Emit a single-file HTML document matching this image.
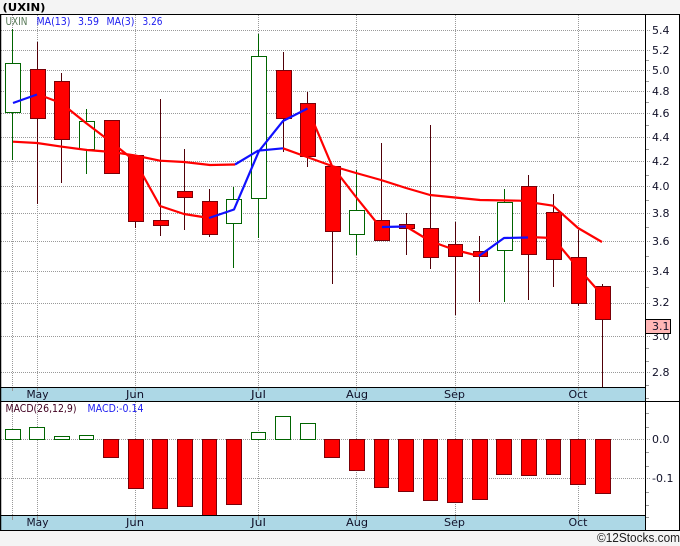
<!DOCTYPE html>
<html><head><meta charset="utf-8"><style>
html,body{margin:0;padding:0;background:#f4f4f4;width:680px;height:546px;overflow:hidden}
svg{display:block}
text{font-family:"DejaVu Sans","Liberation Sans",sans-serif;font-size:11px}
.g{fill:#fff;stroke:#006400;stroke-width:1}
.r{fill:#f00;stroke:#7a0008;stroke-width:1}
.m{fill:#101028}
.b{fill:#2020f0}
</style></head><body>
<svg width="680" height="546" viewBox="0 0 680 546" xmlns="http://www.w3.org/2000/svg">
<rect x="0" y="14" width="680" height="517" fill="#fff"/>
<rect x="0" y="387" width="645" height="14" fill="#add8e6"/>
<rect x="0" y="515" width="645" height="15" fill="#add8e6"/>
<!-- grid -->
<path d="M1 30.5H651M1 50.5H651M1 70.5H651M1 91.5H651M1 113.5H651M1 137.5H651M1 161.5H651M1 186.5H651M1 213.5H651M1 241.5H651M1 271.5H651M1 303.5H651M1 336.5H651M1 372.5H651M1 439.5H651M1 478.5H651" stroke="#999" stroke-width="1" stroke-dasharray="1 1" fill="none"/>
<path d="M12.5 15V387M37.5 15V387M135.5 15V387M258.5 15V387M356.5 15V387M455.5 15V387M578.5 15V387M12.5 402V515M37.5 402V515M135.5 402V515M258.5 402V515M356.5 402V515M455.5 402V515M578.5 402V515" stroke="#999" stroke-width="1" stroke-dasharray="1 1" fill="none"/>
<path d="M12.5 387V391M37.5 387V391M135.5 387V391M258.5 387V391M356.5 387V391M455.5 387V391M578.5 387V391M12.5 515V520M37.5 515V520M135.5 515V520M258.5 515V520M356.5 515V520M455.5 515V520M578.5 515V520" stroke="#999" stroke-width="1" fill="none"/>
<!-- wicks -->
<path d="M12.5 29V160M86.5 109V174M233.5 187V268M258.5 34V238M356.5 170V255M504.5 189V302" stroke="#006400" stroke-width="1" fill="none"/>
<path d="M37.5 42V204M61.5 73V183M111.5 120V174M135.5 155V228M160.5 99V236M184.5 149V230M209.5 189V237M283.5 52V152M307.5 92V167M332.5 166V284M381.5 143V240M406.5 213V255M430.5 125V269M455.5 222V315M479.5 236V302M528.5 175V300M553.5 194V287M578.5 230V306M602.5 284V387" stroke="#500008" stroke-width="1" fill="none"/>
<!-- candles -->
<rect class="g" x="5.5" y="63.5" width="15" height="49"/>
<rect class="r" x="30.5" y="69.5" width="15" height="49"/>
<rect class="r" x="54.5" y="81.5" width="15" height="58"/>
<rect class="g" x="79.5" y="121.5" width="15" height="28"/>
<rect class="r" x="104.5" y="120.5" width="15" height="53"/>
<rect class="r" x="128.5" y="155.5" width="15" height="66"/>
<rect class="r" x="153.5" y="220.5" width="15" height="5"/>
<rect class="r" x="177.5" y="191.5" width="15" height="6"/>
<rect class="r" x="202.5" y="201.5" width="15" height="33"/>
<rect class="g" x="226.5" y="199.5" width="15" height="24"/>
<rect class="g" x="251.5" y="56.5" width="15" height="142"/>
<rect class="r" x="276.5" y="70.5" width="15" height="48"/>
<rect class="r" x="300.5" y="103.5" width="15" height="53"/>
<rect class="r" x="325.5" y="166.5" width="15" height="65"/>
<rect class="g" x="349.5" y="210.5" width="15" height="24"/>
<rect class="r" x="374.5" y="220.5" width="15" height="20"/>
<rect class="r" x="399.5" y="224.5" width="15" height="4"/>
<rect class="r" x="423.5" y="228.5" width="15" height="29"/>
<rect class="r" x="448.5" y="244.5" width="14" height="12"/>
<rect class="r" x="473.5" y="251.5" width="14" height="5"/>
<rect class="g" x="497.5" y="202.5" width="15" height="48"/>
<rect class="r" x="521.5" y="186.5" width="15" height="68"/>
<rect class="r" x="546.5" y="212.5" width="15" height="47"/>
<rect class="r" x="571.5" y="257.5" width="15" height="46"/>
<rect class="r" x="595.5" y="286.5" width="15" height="33"/>
<!-- MA lines -->
<g fill="none" stroke-width="2.2" stroke-linejoin="round">
<path stroke="#f00" d="M13 141.7L37 143L62 146.7L87 150L112 152L135 155.5L160 160.7L184 162L210 165L235 164.5M283 148.3L307 157L332 166L356 173L381 180L406 188L430 195L450 197L480 200L520 200.7L553 205.7L578 228L602 242"/>
<path stroke="#f00" d="M37 94L61 103L86 123L111 142L135 161L160 206L184 214L209 218M307.5 108L332 166L356 197L381 228M406 226.5L430 241L455 250L479 256M528 237L553 238L578 268L603 296"/>
<path stroke="#1010ff" d="M13 103L37 94.5M209 218L234 209.5L259 151L283 121L307.5 108.5M382 227L406 226.5M479 256L504 238L528 237.5M235 164.5L258 150.7L283 148.3"/>
</g>
<!-- MACD bars -->
<rect class="g" x="5.5" y="429.5" width="15" height="10"/>
<rect class="g" x="29.5" y="427.5" width="15" height="12"/>
<rect class="g" x="54.5" y="436.5" width="15" height="3"/>
<rect class="g" x="79.5" y="435.5" width="14" height="4"/>
<rect class="r" x="103.5" y="439.5" width="15" height="18"/>
<rect class="r" x="128.5" y="439.5" width="15" height="49"/>
<rect class="r" x="152.5" y="439.5" width="15" height="69"/>
<rect class="r" x="177.5" y="439.5" width="15" height="67"/>
<rect class="r" x="202.5" y="439.5" width="14" height="76"/>
<rect class="r" x="226.5" y="439.5" width="15" height="65"/>
<rect class="g" x="251.5" y="432.5" width="14" height="7"/>
<rect class="g" x="275.5" y="416.5" width="15" height="23"/>
<rect class="g" x="300.5" y="423.5" width="15" height="16"/>
<rect class="r" x="324.5" y="439.5" width="15" height="18"/>
<rect class="r" x="349.5" y="439.5" width="15" height="31"/>
<rect class="r" x="374.5" y="439.5" width="14" height="48"/>
<rect class="r" x="398.5" y="439.5" width="15" height="52"/>
<rect class="r" x="423.5" y="439.5" width="14" height="61"/>
<rect class="r" x="447.5" y="439.5" width="15" height="63"/>
<rect class="r" x="472.5" y="439.5" width="15" height="60"/>
<rect class="r" x="496.5" y="439.5" width="15" height="35"/>
<rect class="r" x="521.5" y="439.5" width="15" height="36"/>
<rect class="r" x="546.5" y="439.5" width="14" height="35"/>
<rect class="r" x="570.5" y="439.5" width="15" height="45"/>
<rect class="r" x="595.5" y="439.5" width="15" height="54"/>
<!-- minor ticks -->
<path d="M646 60.5H649M646 81.5H649M646 102.5H649M646 125.5H649M646 149.5H649M646 175.5H649M646 200.5H649M646 227.5H649M646 256.5H649M646 287.5H649M646 348.5H649M646 361.5H649M646 385.5H649M646 398.5H649M646 413.5H649M646 427.5H649M646 452.5H649M646 466.5H649M646 492.5H649M646 505.5H649M646 517.5H649" stroke="#999" stroke-width="1" fill="none"/>
<!-- frame -->
<path d="M0 14.5H680M0 387.5H645M0 401.5H680M0 515.5H645M0 530.5H680M645.5 14V530M679.5 14V530" stroke="#000" stroke-width="1" fill="none"/>
<path d="M.5 14V531" stroke="#000" stroke-width="1.5" fill="none"/>
<!-- text -->
<text x="2.5" y="11" textLength="43" lengthAdjust="spacingAndGlyphs" style="font-weight:bold;fill:#000">(UXIN)</text>
<text x="5.5" y="25" textLength="22" lengthAdjust="spacingAndGlyphs" style="fill:#557755">UXIN</text>
<text class="b" x="36.5" y="25" textLength="34" lengthAdjust="spacingAndGlyphs">MA(13)</text>
<text class="b" x="78" y="25" textLength="21" lengthAdjust="spacingAndGlyphs">3.59</text>
<text class="b" x="106.5" y="25" textLength="28" lengthAdjust="spacingAndGlyphs">MA(3)</text>
<text class="b" x="142.5" y="25" textLength="20" lengthAdjust="spacingAndGlyphs">3.26</text>
<text class="m" x="652" y="34">5.4</text>
<text class="m" x="652" y="54">5.2</text>
<text class="m" x="652" y="74">5.0</text>
<text class="m" x="652" y="95">4.8</text>
<text class="m" x="652" y="117">4.6</text>
<text class="m" x="652" y="141">4.4</text>
<text class="m" x="652" y="165">4.2</text>
<text class="m" x="652" y="190">4.0</text>
<text class="m" x="652" y="217">3.8</text>
<text class="m" x="652" y="245">3.6</text>
<text class="m" x="652" y="275">3.4</text>
<text class="m" x="652" y="306">3.2</text>
<text class="m" x="652" y="340">3.0</text>
<text class="m" x="652" y="376">2.8</text>
<rect x="645.5" y="319.5" width="25" height="14" fill="#ffb6b6" stroke="#000"/>
<text class="m" x="652" y="330">3.1</text>
<text class="m" x="652" y="443">0.0</text>
<text class="m" x="652" y="482">-0.1</text>
<text class="m" x="26.5" y="398" textLength="22" lengthAdjust="spacingAndGlyphs">May</text>
<text class="m" x="126" y="398" textLength="18" lengthAdjust="spacingAndGlyphs">Jun</text>
<text class="m" x="251" y="398" textLength="15" lengthAdjust="spacingAndGlyphs">Jul</text>
<text class="m" x="346" y="398" textLength="22" lengthAdjust="spacingAndGlyphs">Aug</text>
<text class="m" x="444" y="398" textLength="21" lengthAdjust="spacingAndGlyphs">Sep</text>
<text class="m" x="568.5" y="398" textLength="19" lengthAdjust="spacingAndGlyphs">Oct</text>
<text class="m" x="26.5" y="526" textLength="22" lengthAdjust="spacingAndGlyphs">May</text>
<text class="m" x="126" y="526" textLength="18" lengthAdjust="spacingAndGlyphs">Jun</text>
<text class="m" x="251" y="526" textLength="15" lengthAdjust="spacingAndGlyphs">Jul</text>
<text class="m" x="346" y="526" textLength="22" lengthAdjust="spacingAndGlyphs">Aug</text>
<text class="m" x="444" y="526" textLength="21" lengthAdjust="spacingAndGlyphs">Sep</text>
<text class="m" x="568.5" y="526" textLength="19" lengthAdjust="spacingAndGlyphs">Oct</text>
<text x="5.5" y="412" textLength="71" lengthAdjust="spacingAndGlyphs" style="fill:#400020">MACD(26,12,9)</text>
<text class="b" x="87.5" y="412" textLength="56" lengthAdjust="spacingAndGlyphs">MACD:-0.14</text>
<text x="597" y="542" style="font-family:'Liberation Sans',sans-serif;font-size:12.5px;fill:#222" textLength="83" lengthAdjust="spacingAndGlyphs">©12Stocks.com</text>
</svg>
</body></html>
